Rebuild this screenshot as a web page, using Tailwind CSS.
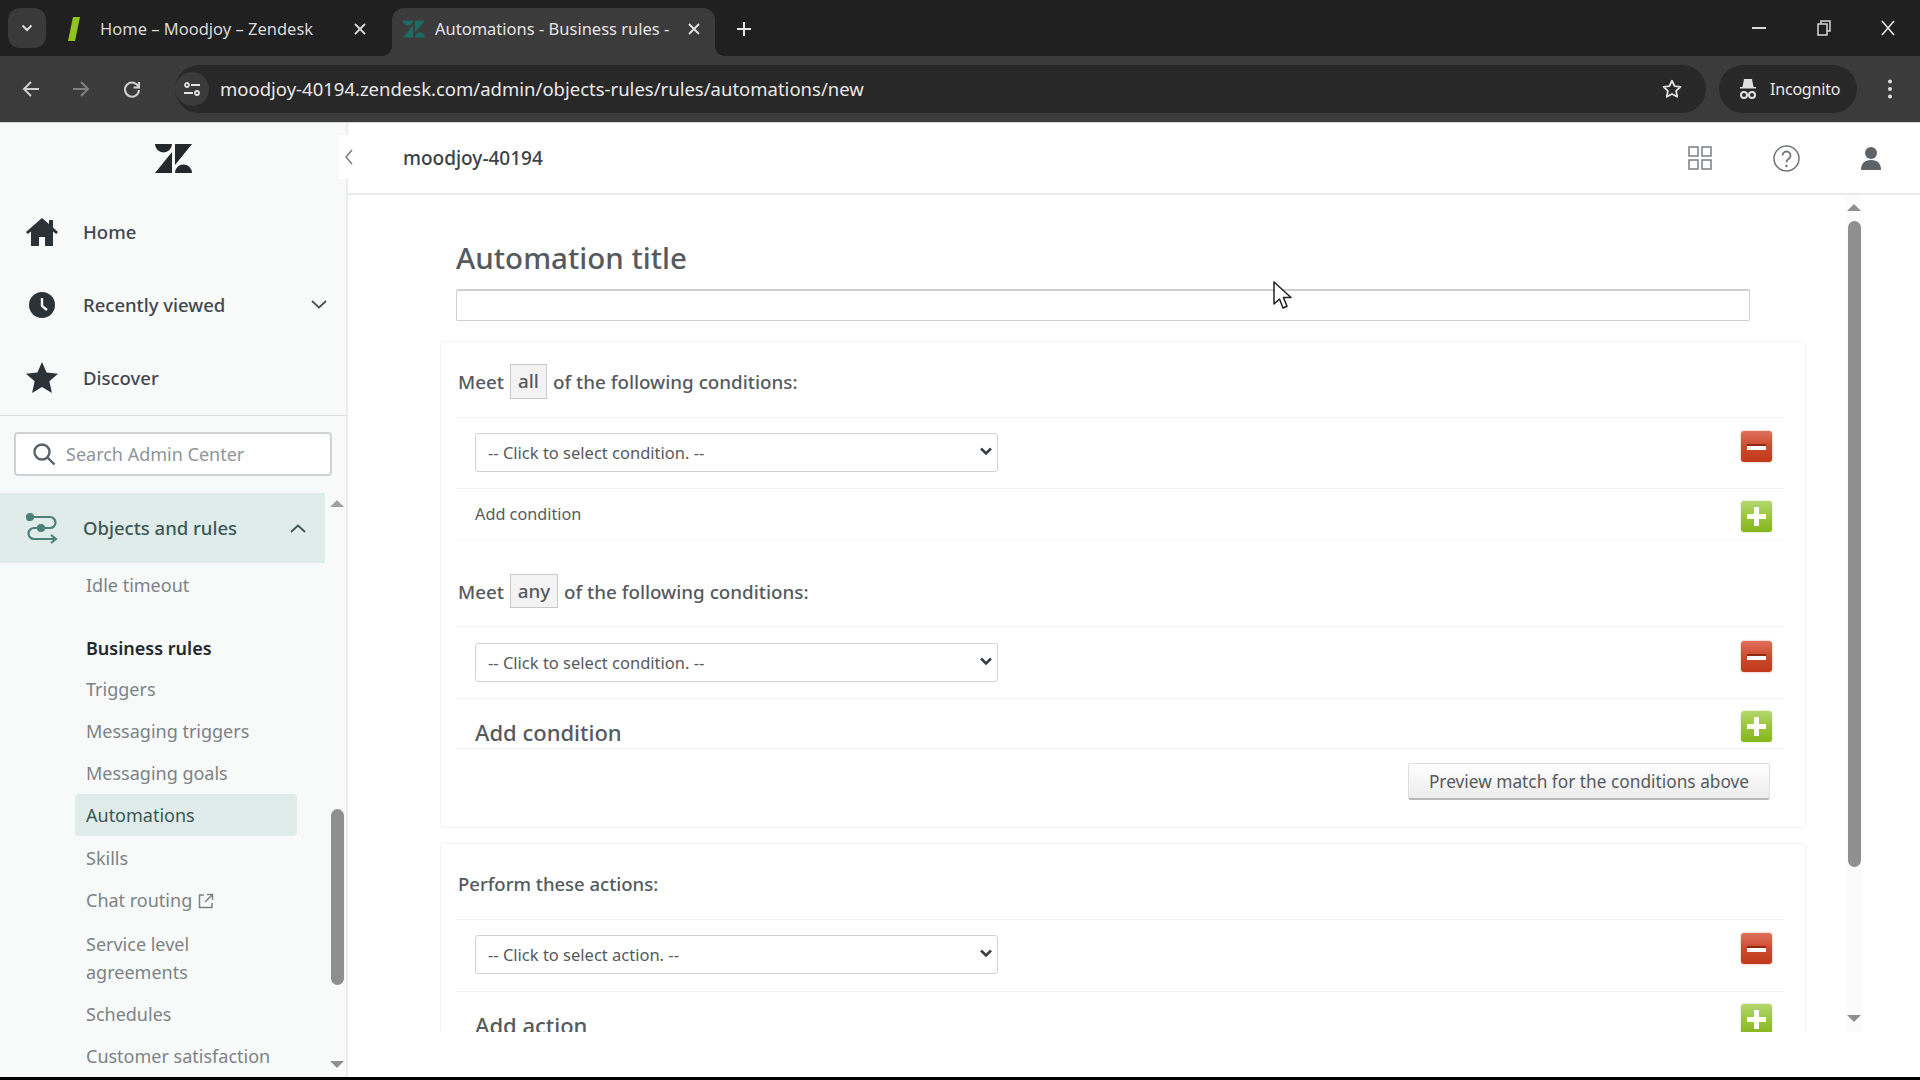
<!DOCTYPE html>
<html lang="en">
<head>
<meta charset="utf-8">
<title>Automations - Business rules</title>
<script src="https://cdn.jsdelivr.net/npm/@tailwindcss/browser@4"></script>
</head>
<body class="w-[1920px] h-[1080px] overflow-hidden bg-black font-['Noto_Sans',sans-serif] relative">

<!-- Tab strip -->
<div class="h-[56px] bg-[#202020] flex items-end pl-[8px] text-[#d8d8d8] text-[16.500px]">
  <div class="w-[38px] h-[40px] mb-[8px] rounded-[12px] bg-[#3a3a3a] flex items-center justify-center">
    <svg width="12" height="8" viewBox="0 0 12 8" fill="none" stroke="#dddddd" stroke-width="2"><path d="M1.500 1.500 6 6l4.500-4.500"/></svg>
  </div>
  <div class="w-[346px] h-[48px] flex items-center pl-[21px] pr-[25px] pb-[6px]">
    <svg width="14" height="26" viewBox="0 0 14 26"><path d="M6 1h7L8 25H1z" fill="#8fc31f"/></svg>
    <span class="ml-[19px] flex-1">Home – Moodjoy – Zendesk</span>
    <svg width="14" height="14" viewBox="0 0 14 14" stroke="#d8d8d8" stroke-width="1.800"><path d="M2 2l10 10M12 2 2 12"/></svg>
  </div>
  <div class="w-[323px] h-[48px] rounded-t-[12px] bg-[#3b3b3b] flex items-center pl-[11px] pr-[14px] pb-[6px] relative">
    <svg width="22" height="18" viewBox="0 0 37 29" fill="#1e6b63"><path d="M0 0h17a8.500 8.500 0 0 1-17 0zM17 8v21H0zM20 0h17L20 21zM20 29a8.500 8.500 0 0 1 17 0z"/></svg>
    <span class="ml-[10px] flex-1 whitespace-nowrap overflow-hidden text-[#e4e4e4]">Automations - Business rules -</span>
    <svg class="ml-[8px] shrink-0" width="14" height="14" viewBox="0 0 14 14" stroke="#e4e4e4" stroke-width="1.800"><path d="M2 2l10 10M12 2 2 12"/></svg>
    <span class="absolute -left-[10px] bottom-0 w-[10px] h-[10px] bg-[radial-gradient(circle_at_0_0,transparent_10px,#3b3b3b_10px)]"></span>
    <span class="absolute -right-[10px] bottom-0 w-[10px] h-[10px] bg-[radial-gradient(circle_at_100%_0,transparent_10px,#3b3b3b_10px)]"></span>
  </div>
  <div class="w-[58px] h-[48px] flex items-center justify-center pb-[6px]">
    <svg width="16" height="16" viewBox="0 0 16 16" stroke="#e4e4e4" stroke-width="2"><path d="M8 1v14M1 8h14"/></svg>
  </div>
  <div class="flex-1 h-[56px] flex items-center justify-end">
    <svg class="mr-[51px]" width="14" height="2" viewBox="0 0 14 2"><path d="M0 1h14" stroke="#d8d8d8" stroke-width="2"/></svg>
    <svg class="mr-[50px]" width="14" height="16" viewBox="0 0 14 16" fill="none" stroke="#d8d8d8" stroke-width="1.500"><path d="M1 4h9v11H1zM4 4V1h9v10h-3"/></svg>
    <svg class="mr-[25px]" width="14" height="16" viewBox="0 0 14 16" stroke="#e4e4e4" stroke-width="1.600"><path d="M1 1l12 14M13 1 1 15"/></svg>
  </div>
</div>

<!-- Toolbar -->
<div class="h-[66px] bg-[#3b3b3b] flex items-center relative text-[#e8e8e8]">
  <div class="w-[175px] flex items-center shrink-0">
    <svg class="ml-[22px]" width="18" height="18" viewBox="0 0 18 18" fill="none" stroke="#cfcfcf" stroke-width="2"><path d="M17 9H2M9 2 2 9l7 7"/></svg>
    <svg class="ml-[32px]" width="18" height="18" viewBox="0 0 18 18" fill="none" stroke="#808080" stroke-width="2"><path d="M1 9h15M9 2l7 7-7 7"/></svg>
    <svg class="ml-[32px]" width="20" height="20" viewBox="0 0 20 20" fill="none" stroke="#cfcfcf" stroke-width="2"><path d="M16.500 8A7 7 0 1 0 17 11M17 3v5.500h-5.500"/></svg>
  </div>
  <div class="w-[1531px] h-[48px] rounded-full bg-[#282828] flex items-center shrink-0">
    <div class="w-[34px] h-[34px] rounded-full bg-[#3b3b3b] flex items-center justify-center">
      <svg width="18" height="18" viewBox="0 0 18 18" fill="none" stroke="#e0e0e0" stroke-width="1.800"><circle cx="4" cy="5" r="2"/><path d="M8 5h9M1 13h9"/><circle cx="14" cy="13" r="2"/></svg>
    </div>
    <span class="ml-[11px] text-[18.500px] whitespace-nowrap">moodjoy-40194.zendesk.com/admin/objects-rules/rules/automations/new</span>
    <svg class="ml-auto mr-[23px]" width="22" height="22" viewBox="0 0 24 24" fill="none" stroke="#e0e0e0" stroke-width="2" stroke-linejoin="round"><path d="m12 3 2.800 5.900 6.400.8-4.700 4.400 1.200 6.400-5.700-3.100-5.700 3.100 1.200-6.400-4.700-4.400 6.400-.8z"/></svg>
  </div>
  <div class="ml-[13px] w-[138px] h-[48px] rounded-full bg-[#282828] flex items-center pl-[19px] shrink-0">
    <svg width="20" height="22" viewBox="0 0 20 22" fill="#e0e0e0"><path d="M6 1h8l1.500 8H18v1.600H2V9h2.500z"/><circle cx="6" cy="17" r="3" fill="none" stroke="#e0e0e0" stroke-width="2"/><circle cx="14" cy="17" r="3" fill="none" stroke="#e0e0e0" stroke-width="2"/></svg>
    <span class="ml-[12px] text-[16px] tracking-[-0.2px]">Incognito</span>
  </div>
  <svg class="ml-[31px] shrink-0" width="4" height="20" viewBox="0 0 4 20" fill="#e0e0e0"><circle cx="2" cy="2.500" r="2"/><circle cx="2" cy="10" r="2"/><circle cx="2" cy="17.500" r="2"/></svg>
</div>

<!-- Application -->
<div class="h-[955px] flex bg-white border-t border-[#d8d8d8]">
  <!-- Sidebar -->
  <aside class="w-[348px] h-[954px] shrink-0 bg-[#f8f9f9] border-r-2 border-[#ececec] flex flex-col relative">
    <div class="h-[59px] flex items-end justify-center pl-[1px]">
      <svg width="37" height="29" viewBox="0 0 37 29" fill="#23282c" class="mb-[9px]"><path d="M0 0h17a8.500 8.500 0 0 1-17 0zM17 8v21H0zM20 0h17L20 21zM20 29a8.500 8.500 0 0 1 17 0z"/></svg>
    </div>
    <nav class="text-[18.500px] font-medium text-[#3f474d] pt-[13px] pb-[1px]">
      <div class="h-[73px] flex items-center pl-[26px]">
        <svg width="32" height="28" viewBox="0 0 32 28" fill="#2b3238"><path d="M16 0 0 14l1.800 2.100L5 13.400V28h8v-9h6v9h8V13.400l3.200 2.700L32 14l-5-4.400V2h-4v4z"/></svg>
        <span class="ml-[25px]">Home</span>
      </div>
      <div class="h-[73px] flex items-center pl-[26px]">
        <svg class="ml-[3px]" width="26" height="26" viewBox="0 0 26 26"><circle cx="13" cy="13" r="13" fill="#2b3238"/><path d="M13 6v8l5 4" fill="none" stroke="#f8f9f9" stroke-width="2.400"/></svg>
        <span class="ml-[28px]">Recently viewed</span>
        <svg class="ml-auto mr-[19px]" width="16" height="9" viewBox="0 0 16 9" fill="none" stroke="#4a5258" stroke-width="1.800"><path d="m1 1 7 6.500L15 1"/></svg>
      </div>
      <div class="h-[73px] flex items-center pl-[26px]">
        <svg width="32" height="31" viewBox="0 0 32 31" fill="#2b3238"><path d="M16 0l4.600 10.500L32 11.700l-8.600 7.600L25.900 31 16 25l-9.900 6 2.500-11.700L0 11.700l11.400-1.200z"/></svg>
        <span class="ml-[25px]">Discover</span>
      </div>
    </nav>
    <div class="h-px bg-[#dcdedf]"></div>
    <div class="mx-[14px] mt-[16px] w-[318px] h-[44px] rounded-[4px] border-2 border-[#cfd2d4] bg-white flex items-center pl-[16px]">
      <svg width="24" height="24" viewBox="0 0 24 24" fill="none" stroke="#5a6268" stroke-width="2.400"><circle cx="10" cy="10" r="7.500"/><path d="m15.500 15.500 7 7"/></svg>
      <span class="ml-[10px] text-[18px] text-[#8f9599]">Search Admin Center</span>
    </div>
    <div class="mt-[17px] flex flex-1 min-h-0">
      <div class="w-[325px] overflow-hidden">
        <div class="h-[70px] bg-[#dfecea] flex items-center pl-[26px] text-[18.500px] font-medium text-[#3d5854]">
          <svg width="32" height="34" viewBox="0 0 32 34" fill="none" stroke="#4d8078" stroke-width="2.200"><path d="M4 6h20a5 5 0 0 1 0 11H8a5 5 0 0 0 0 11h20"/><path d="m25 24 5 4-5 4"/><circle cx="4" cy="6" r="3" fill="#4d8078"/><circle cx="15" cy="17" r="3" fill="#4d8078"/></svg>
          <span class="ml-[25px] -mt-[1px]">Objects and rules</span>
          <svg class="ml-auto mr-[19px]" width="16" height="9" viewBox="0 0 16 9" fill="none" stroke="#3d5854" stroke-width="1.800"><path d="m1 8 7-6.500L15 8"/></svg>
        </div>
        <ul class="text-[18px] text-[#7c8286] pl-[86px]">
          <li class="h-[43px] mt-[1px] flex items-center">Idle timeout</li>
          <li class="h-[42px] mt-[20px] flex items-center font-semibold text-[#23282c]">Business rules</li>
          <li class="h-[42px] flex items-center -mt-[1px]">Triggers</li>
          <li class="h-[42px] flex items-center">Messaging triggers</li>
          <li class="h-[42px] flex items-center">Messaging goals</li>
          <li class="h-[42px] w-[222px] -ml-[11px] pl-[11px] rounded-[4px] bg-[#dfecea] text-[#3d5854] flex items-center">Automations</li>
          <li class="h-[42px] mt-[1px] flex items-center">Skills</li>
          <li class="h-[43px] flex items-center gap-[6px]">Chat routing
            <svg width="16" height="16" viewBox="0 0 16 16" fill="none" stroke="#7c8286" stroke-width="1.500"><path d="M6 2H1.500v12.500H14V10M9 1.500h5.500V7M14.500 1.500 7 9"/></svg>
          </li>
          <li class="w-[180px] h-[56px] mt-[8px] leading-[28px]">Service level agreements</li>
          <li class="h-[42px] mt-[7px] flex items-center">Schedules</li>
          <li class="h-[42px] flex items-center">Customer satisfaction</li>
        </ul>
      </div>
      <div class="w-[20px] pl-[4px] flex flex-col items-center">
        <div class="mt-[7px] w-0 h-0 border-x-[7px] border-b-[7px] border-x-transparent border-b-[#a0a0a0]"></div>
        <div class="mt-[302px] w-[13px] h-[176px] rounded-full bg-[#8f8f8f]"></div>
        <div class="mt-[76px] w-0 h-0 border-x-[7px] border-t-[7px] border-x-transparent border-t-[#8f8f8f]"></div>
      </div>
    </div>
    <button class="absolute top-[12px] -right-[13px] w-[20px] h-[44px] bg-white flex items-center justify-center">
      <svg width="8" height="16" viewBox="0 0 8 16" fill="none" stroke="#777777" stroke-width="1.400"><path d="M7 1 1 8l6 7"/></svg>
    </button>
  </aside>

  <!-- Main -->
  <main class="flex-1 min-w-0 flex flex-col h-[954px]">
    <header class="h-[72px] border-b-2 border-[#e8e9ea] flex items-center pl-[55px] shrink-0">
      <span class="text-[19px] font-medium text-[#3b4146]">moodjoy-40194</span>
      <svg class="ml-auto" width="24" height="24" viewBox="0 0 24 24" fill="none" stroke="#7a7f84" stroke-width="1.500"><rect x="1" y="1" width="9" height="9"/><rect x="14" y="1" width="9" height="9"/><rect x="1" y="14" width="9" height="9"/><rect x="14" y="14" width="9" height="9"/></svg>
      <svg class="ml-[61px]" width="27" height="27" viewBox="0 0 27 27" fill="none" stroke="#6d7377" stroke-width="1.500"><circle cx="13.500" cy="13.500" r="12.500"/><path d="M9.500 10.500a4 4 0 1 1 6 3.500c-1.300.8-2 1.500-2 3.200" stroke-width="1.800"/><circle cx="13.500" cy="21" r="1.200" fill="#6d7377" stroke="none"/></svg>
      <svg class="ml-[61px] mr-[39px]" width="20" height="23" viewBox="0 0 20 23" fill="#5d6367"><circle cx="10" cy="6" r="6"/><path d="M0 23c0-6 3-10 10-10s10 4 10 10z"/></svg>
    </header>
    <div class="h-[837px] flex overflow-hidden shrink-0">
      <div class="w-[1498px] shrink-0 pl-[92px]">
        <h1 class="ml-[16px] mt-[43px] h-[40px] leading-[39px] text-[29.500px] font-medium text-[#555a5e]">Automation title</h1>
        <input class="block ml-[16px] mt-[11px] w-[1294px] h-[32px] border border-t-2 border-[#cfcfcf] rounded-[2px] bg-white" type="text" aria-label="Automation title">

        <section class="mt-[20px] w-[1366px] h-[487px] border border-[#f4f4f4] rounded-[4px] pl-[15px] pr-[21px] text-[#555a5e]">
          <div class="pt-[22px] pb-[18px] border-b border-[#f3f3f3] flex items-center text-[18.800px] font-medium px-[2px]">
            <span class="pt-[2px]">Meet</span><span class="ml-[6px] h-[35px] w-[37px] border border-[#c8c8c8] bg-[#f3f3f3] flex items-center justify-center">all</span><span class="ml-[6px] pt-[2px]">of the following conditions:</span>
          </div>
          <div class="h-[71px] pt-[13px] border-b border-[#f3f3f3] flex items-start justify-between pl-[19px] pr-[12px]">
            <div class="relative mt-[2px] h-[39px]">
              <select class="appearance-none block w-[523px] h-[39px] border border-[#cfd2d4] rounded-[3px] px-[12px] pt-[2px] text-[16.500px] text-[#555a5e] bg-white"><option>-- Click to select condition. --</option></select>
              <svg class="absolute right-[6px] top-[14px]" width="12" height="9" viewBox="0 0 12 9" fill="none" stroke="#3a3f44" stroke-width="2.600"><path d="m1 1.500 5 5 5-5"/></svg>
            </div>
            <div class="w-[31px] h-[31px] rounded-[3px] bg-gradient-to-b from-[#e0705c] via-[#cc4a2c] to-[#c23a1c] shadow-[0_0_2px_#d98a78] flex items-center justify-center"><div class="w-[19px] h-[6px] bg-white border-t-2 border-[#8e2a14]"></div></div>
          </div>
          <div class="h-[51px] pt-[12px] border-b border-[#f7f7f7] flex items-start justify-between pl-[19px] pr-[12px]">
            <span class="text-[16.250px] text-[#555a5e] leading-[27px]">Add condition</span>
            <div class="w-[31px] h-[31px] rounded-[3px] bg-gradient-to-b from-[#b4d66c] via-[#9ac63a] to-[#85b51a] shadow-[0_0_2px_#b5d47a] relative flex items-center justify-center"><div class="w-[19px] h-[5px] bg-white"></div><div class="absolute w-[5px] h-[19px] bg-white"></div></div>
          </div>
          <div class="pt-[34px] pb-[18px] border-b border-[#f3f3f3] flex items-center text-[18.800px] font-medium px-[2px]">
            <span class="pt-[2px]">Meet</span><span class="ml-[6px] h-[34px] w-[48px] border border-[#c8c8c8] bg-[#f3f3f3] flex items-center justify-center">any</span><span class="ml-[6px] pt-[2px]">of the following conditions:</span>
          </div>
          <div class="h-[72px] pt-[14px] border-b border-[#f3f3f3] flex items-start justify-between pl-[19px] pr-[12px]">
            <div class="relative mt-[2px] h-[39px]">
              <select class="appearance-none block w-[523px] h-[39px] border border-[#cfd2d4] rounded-[3px] px-[12px] pt-[2px] text-[16.500px] text-[#555a5e] bg-white"><option>-- Click to select condition. --</option></select>
              <svg class="absolute right-[6px] top-[14px]" width="12" height="9" viewBox="0 0 12 9" fill="none" stroke="#3a3f44" stroke-width="2.600"><path d="m1 1.500 5 5 5-5"/></svg>
            </div>
            <div class="w-[31px] h-[31px] rounded-[3px] bg-gradient-to-b from-[#e0705c] via-[#cc4a2c] to-[#c23a1c] shadow-[0_0_2px_#d98a78] flex items-center justify-center"><div class="w-[19px] h-[6px] bg-white border-t-2 border-[#8e2a14]"></div></div>
          </div>
          <div class="h-[50px] pt-[12px] border-b border-[#f3f3f3] flex items-start justify-between pl-[19px] pr-[12px]">
            <span class="text-[22px] font-medium text-[#555a5e] leading-[43px]">Add condition</span>
            <div class="w-[31px] h-[31px] rounded-[3px] bg-gradient-to-b from-[#b4d66c] via-[#9ac63a] to-[#85b51a] shadow-[0_0_2px_#b5d47a] relative flex items-center justify-center"><div class="w-[19px] h-[5px] bg-white"></div><div class="absolute w-[5px] h-[19px] bg-white"></div></div>
          </div>
          <div class="pt-[14px] flex justify-end pr-[14px]">
            <button class="w-[362px] h-[37px] pt-[2px] rounded-[3px] border border-[#dedede] border-b-2 border-b-[#b8b8b8] bg-gradient-to-b from-white to-[#ececec] text-[17.300px] text-[#555a5e]">Preview match for the conditions above</button>
          </div>
        </section>

        <section class="mt-[15px] w-[1366px] h-[260px] border border-[#f4f4f4] rounded-[4px] pl-[15px] pr-[21px] text-[#555a5e]">
          <div class="h-[76px] pt-[24px] border-b border-[#f3f3f3] text-[18.500px] font-medium px-[2px] leading-[32px]">Perform these actions:</div>
          <div class="h-[72px] pt-[13px] border-b border-[#f3f3f3] flex items-start justify-between pl-[19px] pr-[12px]">
            <div class="relative mt-[2px] h-[39px]">
              <select class="appearance-none block w-[523px] h-[39px] border border-[#cfd2d4] rounded-[3px] px-[12px] pt-[2px] text-[16.500px] text-[#555a5e] bg-white"><option>-- Click to select action. --</option></select>
              <svg class="absolute right-[6px] top-[14px]" width="12" height="9" viewBox="0 0 12 9" fill="none" stroke="#3a3f44" stroke-width="2.600"><path d="m1 1.500 5 5 5-5"/></svg>
            </div>
            <div class="w-[31px] h-[31px] rounded-[3px] bg-gradient-to-b from-[#e0705c] via-[#cc4a2c] to-[#c23a1c] shadow-[0_0_2px_#d98a78] flex items-center justify-center"><div class="w-[19px] h-[6px] bg-white border-t-2 border-[#8e2a14]"></div></div>
          </div>
          <div class="h-[72px] pt-[12px] flex items-start justify-between pl-[19px] pr-[12px]">
            <span class="text-[22px] font-medium text-[#555a5e] leading-[43px]">Add action</span>
            <div class="w-[31px] h-[31px] rounded-[3px] bg-gradient-to-b from-[#b4d66c] via-[#9ac63a] to-[#85b51a] shadow-[0_0_2px_#b5d47a] relative flex items-center justify-center"><div class="w-[19px] h-[5px] bg-white"></div><div class="absolute w-[5px] h-[19px] bg-white"></div></div>
          </div>
        </section>
      </div>
      <!-- Scroll bar -->
      <div class="w-[16px] bg-[#fbfbfb] flex flex-col items-center">
        <div class="mt-[9px] w-0 h-0 border-x-[7px] border-b-[7px] border-x-transparent border-b-[#8f8f8f]"></div>
        <div class="mt-[10px] w-[13px] h-[646px] rounded-full bg-[#8f8f8f]"></div>
        <div class="mt-[148px] w-0 h-0 border-x-[7px] border-t-[7px] border-x-transparent border-t-[#8f8f8f]"></div>
      </div>
    </div>
  </main>
</div>

<!-- Mouse pointer -->
<svg class="absolute left-[1273px] top-[281px]" width="20" height="29" viewBox="0 0 20 29"><path d="M1 1v22l5.500-5 3.500 9 4-1.700-3.600-8.800H18z" fill="#fff" stroke="#222" stroke-width="1.500" stroke-linejoin="round"/></svg>
</body>
</html>
